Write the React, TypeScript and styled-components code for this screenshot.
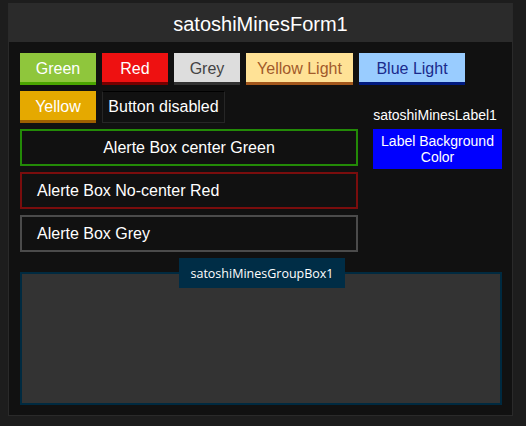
import React from "react";
import styled, { createGlobalStyle } from "styled-components";

const GlobalStyle = createGlobalStyle`
  html, body {
    margin: 0;
    padding: 0;
    background: #1d1d1d;
  }
  body {
    font-family: "Liberation Sans", Arial, sans-serif;
    color: #ffffff;
  }
`;

type Tone = "green" | "red" | "grey" | "yellowLight" | "blueLight" | "yellow";

const tones: Record<Tone, { bg: string; edge: string; text: string }> = {
  green: { bg: "#8fc63c", edge: "#4aa500", text: "#ffffff" },
  red: { bg: "#ee1111", edge: "#750000", text: "#ffffff" },
  grey: { bg: "#dddddd", edge: "#333333", text: "#444444" },
  yellowLight: { bg: "#ffe296", edge: "#a3571c", text: "#a25a2a" },
  blueLight: { bg: "#99ccff", edge: "#001a80", text: "#1a2a8c" },
  yellow: { bg: "#e5a900", edge: "#9e6000", text: "#ffffff" },
};

const alertBorders = {
  green: "#238a07",
  red: "#7a0d0d",
  grey: "#4b4b4b",
};

const Page = styled.div`
  padding: 3px 13px 10px 8px;
`;

const Form = styled.div`
  width: 505px;
  height: 413px;
  box-sizing: border-box;
  border: 1px solid #2a2a2a;
  border-top: none;
  background: #111111;
  display: flex;
  flex-direction: column;
`;

const TitleBar = styled.div`
  height: 40px;
  background: #2b2b2b;
  display: flex;
  align-items: center;
  justify-content: center;
  font-size: 20px;
  color: #ffffff;
  padding-top: 3px;
  box-sizing: border-box;
`;

const Body = styled.div`
  padding: 11px 10px 10px 11px;
  display: flex;
  flex-direction: column;
`;

const ButtonRow = styled.div`
  display: flex;
  gap: 6px;
`;

const ColorButton = styled.button<{ $tone: Tone; $w: number }>`
  width: ${(p) => p.$w}px;
  height: 32px;
  margin: 0;
  padding: 2px 0 0;
  border: none;
  border-bottom: 3px solid ${(p) => tones[p.$tone].edge};
  background: ${(p) => tones[p.$tone].bg};
  color: ${(p) => tones[p.$tone].text};
  font-family: "Liberation Sans", Arial, sans-serif;
  font-size: 16px;
  box-sizing: border-box;
`;

const DisabledButton = styled.button`
  width: 123px;
  height: 32px;
  margin: 0;
  padding: 0 0 1px;
  border: 1px solid #262626;
  border-top-color: #000000;
  background: #111111;
  color: #ffffff;
  font-family: "Liberation Sans", Arial, sans-serif;
  font-size: 16px;
  box-sizing: border-box;
`;

const Split = styled.div`
  display: grid;
  grid-template-columns: 338px 129px;
  column-gap: 15px;
  margin-top: 6px;
`;

const LeftColumn = styled.div`
  display: flex;
  flex-direction: column;
  gap: 6px;
`;

const RightColumn = styled.div`
  display: flex;
  flex-direction: column;
  padding-top: 16px;
`;

const AlertBox = styled.div<{ $border: keyof typeof alertBorders; $center?: boolean }>`
  height: 37px;
  box-sizing: border-box;
  border: 2px solid ${(p) => alertBorders[p.$border]};
  display: flex;
  align-items: center;
  justify-content: ${(p) => (p.$center ? "center" : "flex-start")};
  padding: 1px 0 0 ${(p) => (p.$center ? "0" : "15px")};
  font-size: 16px;
  color: #ffffff;
`;

const PlainLabel = styled.div`
  font-size: 14px;
  line-height: 16px;
  text-align: center;
  margin-right: 5px;
  margin-bottom: 6px;
`;

const BlueLabel = styled.div`
  height: 40px;
  background: #0000ff;
  color: #ffffff;
  font-size: 14px;
  line-height: 16px;
  text-align: center;
  box-sizing: border-box;
  padding-top: 4px;
`;

const GroupBox = styled.div`
  position: relative;
  margin-top: 20px;
  width: 482px;
  height: 133px;
  box-sizing: border-box;
  border: 2px solid #002a40;
  background: #333333;
`;

const GroupTitle = styled.div`
  position: absolute;
  top: -16px;
  left: 157px;
  width: 166px;
  height: 30px;
  background: #002d46;
  color: #ffffff;
  font-family: "Open Sans", "Noto Sans", sans-serif;
  font-size: 12.5px;
  display: flex;
  align-items: center;
  justify-content: center;
`;

export default function App() {
  return (
    <>
      <GlobalStyle />
      <Page>
        <Form>
          <TitleBar>satoshiMinesForm1</TitleBar>
          <Body>
            <ButtonRow>
              <ColorButton $tone="green" $w={76}>Green</ColorButton>
              <ColorButton $tone="red" $w={66}>Red</ColorButton>
              <ColorButton $tone="grey" $w={66}>Grey</ColorButton>
              <ColorButton $tone="yellowLight" $w={107}>Yellow Light</ColorButton>
              <ColorButton $tone="blueLight" $w={106}>Blue Light</ColorButton>
            </ButtonRow>
            <Split>
              <LeftColumn>
                <ButtonRow>
                  <ColorButton $tone="yellow" $w={76}>Yellow</ColorButton>
                  <DisabledButton disabled>Button disabled</DisabledButton>
                </ButtonRow>
                <AlertBox $border="green" $center>Alerte Box center Green</AlertBox>
                <AlertBox $border="red">Alerte Box No-center Red</AlertBox>
                <AlertBox $border="grey">Alerte Box Grey</AlertBox>
              </LeftColumn>
              <RightColumn>
                <PlainLabel>satoshiMinesLabel1</PlainLabel>
                <BlueLabel>
                  Label Background
                  <br />
                  Color
                </BlueLabel>
              </RightColumn>
            </Split>
            <GroupBox>
              <GroupTitle>satoshiMinesGroupBox1</GroupTitle>
            </GroupBox>
          </Body>
        </Form>
      </Page>
    </>
  );
}
